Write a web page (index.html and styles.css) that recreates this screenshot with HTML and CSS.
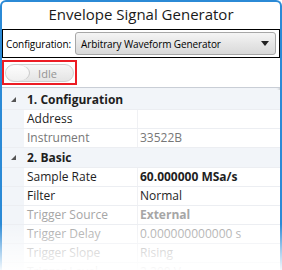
FILE: index.html
```html
<!DOCTYPE html>
<html lang="en">
  <head>
    <meta charset="UTF-8" />
    <title>Envelope Signal Generator</title>
    <link rel="stylesheet" href="styles.css">
  </head>
  <body>
    <div class="page">
      <div class="window">
        <h1 class="title">Envelope Signal Generator</h1>

        <div class="config-row">
          <span class="config-label">Configuration:</span>
          <div class="select">
            <span>Arbitrary Waveform Generator</span>
            <span class="caret"></span>
          </div>
        </div>

        <div class="toggle-row">
          <div class="toggle-frame">
            <div class="toggle">
              <span class="knob"></span>
              <span class="toggle-text">Idle</span>
            </div>
          </div>
        </div>

        <div class="grid">
          <div class="category">
            <span class="gutter"><span class="expander"></span></span>
            <span class="cat-name">1. Configuration</span>
          </div>
          <div class="prop">
            <span class="gutter"></span>
            <span class="name">Address</span>
            <span class="value"></span>
          </div>
          <div class="prop readonly">
            <span class="gutter"></span>
            <span class="name">Instrument</span>
            <span class="value">33522B</span>
          </div>

          <div class="category">
            <span class="gutter"><span class="expander"></span></span>
            <span class="cat-name">2. Basic</span>
          </div>
          <div class="prop">
            <span class="gutter"></span>
            <span class="name">Sample Rate</span>
            <span class="value bold">60.000000 MSa/s</span>
          </div>
          <div class="prop">
            <span class="gutter"></span>
            <span class="name">Filter</span>
            <span class="value">Normal</span>
          </div>
          <div class="prop disabled">
            <span class="gutter"></span>
            <span class="name">Trigger Source</span>
            <span class="value bold">External</span>
          </div>
          <div class="prop disabled">
            <span class="gutter"></span>
            <span class="name">Trigger Delay</span>
            <span class="value">0.000000000000 s</span>
          </div>
          <div class="prop disabled">
            <span class="gutter"></span>
            <span class="name">Trigger Slope</span>
            <span class="value">Rising</span>
          </div>
          <div class="prop disabled">
            <span class="gutter"></span>
            <span class="name">Trigger Level</span>
            <span class="value">2.200 V</span>
          </div>
        </div>
      </div>

      <!-- white fade over the bottom of the window -->
      <div class="fade"></div>
    </div>
  </body>
</html>
```

FILE: styles.css
```css
body {
  margin: 0;
  padding: 0;
  background: #ffffff;
  font-family: "Open Sans", "Noto Sans", sans-serif;
  color: #1e1e1e;
}

.page {
  position: relative;
  width: 282px;
  height: 270px;
  overflow: hidden;
}

.window {
  width: 278px;
  height: 268px;
  border: 2px solid #2b8ad6;
  border-bottom: none;
  border-radius: 6px 6px 0 0;
  overflow: hidden;
  background: #ffffff;
}

.title {
  margin: 0;
  height: 27px;
  line-height: 25px;
  text-align: center;
  font-size: 15px;
  font-weight: normal;
  color: #1a1a1a;
}

.config-row {
  display: flex;
  align-items: center;
  height: 27px;
  padding: 0 3px;
  border: 1px solid #000000;
  gap: 4px;
  font-size: 10px;
  letter-spacing: -0.1px;
  color: #000000;
}

.select {
  flex: 1;
  display: flex;
  align-items: center;
  justify-content: space-between;
  height: 21px;
  padding: 0 6px 0 5px;
  border: 1px solid #a7a7a7;
  border-radius: 3px;
  background: linear-gradient(#f5f5f5, #e6e6e6 50%, #d9d9d9);
}

.caret {
  width: 0;
  height: 0;
  border-left: 4px solid transparent;
  border-right: 4px solid transparent;
  border-top: 5px solid #222222;
}

.toggle-row {
  height: 30px;
  padding-top: 2px;
  box-sizing: border-box;
  border-bottom: 1px solid #c9ced6;
}

.toggle-frame {
  width: 69px;
  height: 18px;
  padding: 2px 1px 1px;
  border: 2px solid #ec1c24;
}

.toggle {
  height: 18px;
  border: 1px solid #cfcfcf;
  border-radius: 10px;
  box-sizing: border-box;
  background: linear-gradient(#f6f6f6, #e4e4e4);
  display: flex;
  align-items: center;
}

.knob {
  width: 23px;
  height: 16px;
  border-radius: 50%;
  border-right: 1px solid #cdcdcd;
  background: linear-gradient(#fdfdfd, #efefef);
}

.toggle-text {
  flex: 1;
  text-align: center;
  font-size: 11px;
  color: #949494;
  padding-right: 8px;
}

.grid {
  font-size: 12px;
  padding-top: 2px;
  background: #f2f5f9;
  box-shadow: inset -3px 0 3px -2px rgba(0, 0, 0, 0.18);
}

.category,
.prop {
  display: flex;
  height: 19px;
  align-items: stretch;
  border-bottom: 1px solid #eceef2;
  box-sizing: border-box;
}

.category {
  height: 20px;
  background: #f2f5f9;
}

.prop {
  background: #ffffff;
}

.gutter {
  width: 22px;
  flex: none;
  background: #f2f5f9;
  position: relative;
}

.expander {
  position: absolute;
  left: 9px;
  top: 7px;
  width: 0;
  height: 0;
  border-left: 5px solid transparent;
  border-bottom: 5px solid #555555;
}

.cat-name {
  font-weight: bold;
  line-height: 19px;
  padding-left: 3px;
}

.name {
  width: 110px;
  flex: none;
  padding-left: 3px;
  line-height: 18px;
  border-right: 1px solid #f0f1f4;
}

.value {
  flex: 1;
  padding-left: 2px;
  line-height: 18px;
}

.bold {
  font-weight: bold;
}

.readonly .name,
.readonly .value {
  color: #777777;
}

.disabled .name,
.disabled .value {
  color: #a6a6a6;
}

.fade {
  position: absolute;
  left: 0;
  right: 0;
  bottom: 0;
  height: 46px;
  background: linear-gradient(rgba(255, 255, 255, 0), rgba(255, 255, 255, 0.55) 55%, rgba(255, 255, 255, 0.95));
}
```
